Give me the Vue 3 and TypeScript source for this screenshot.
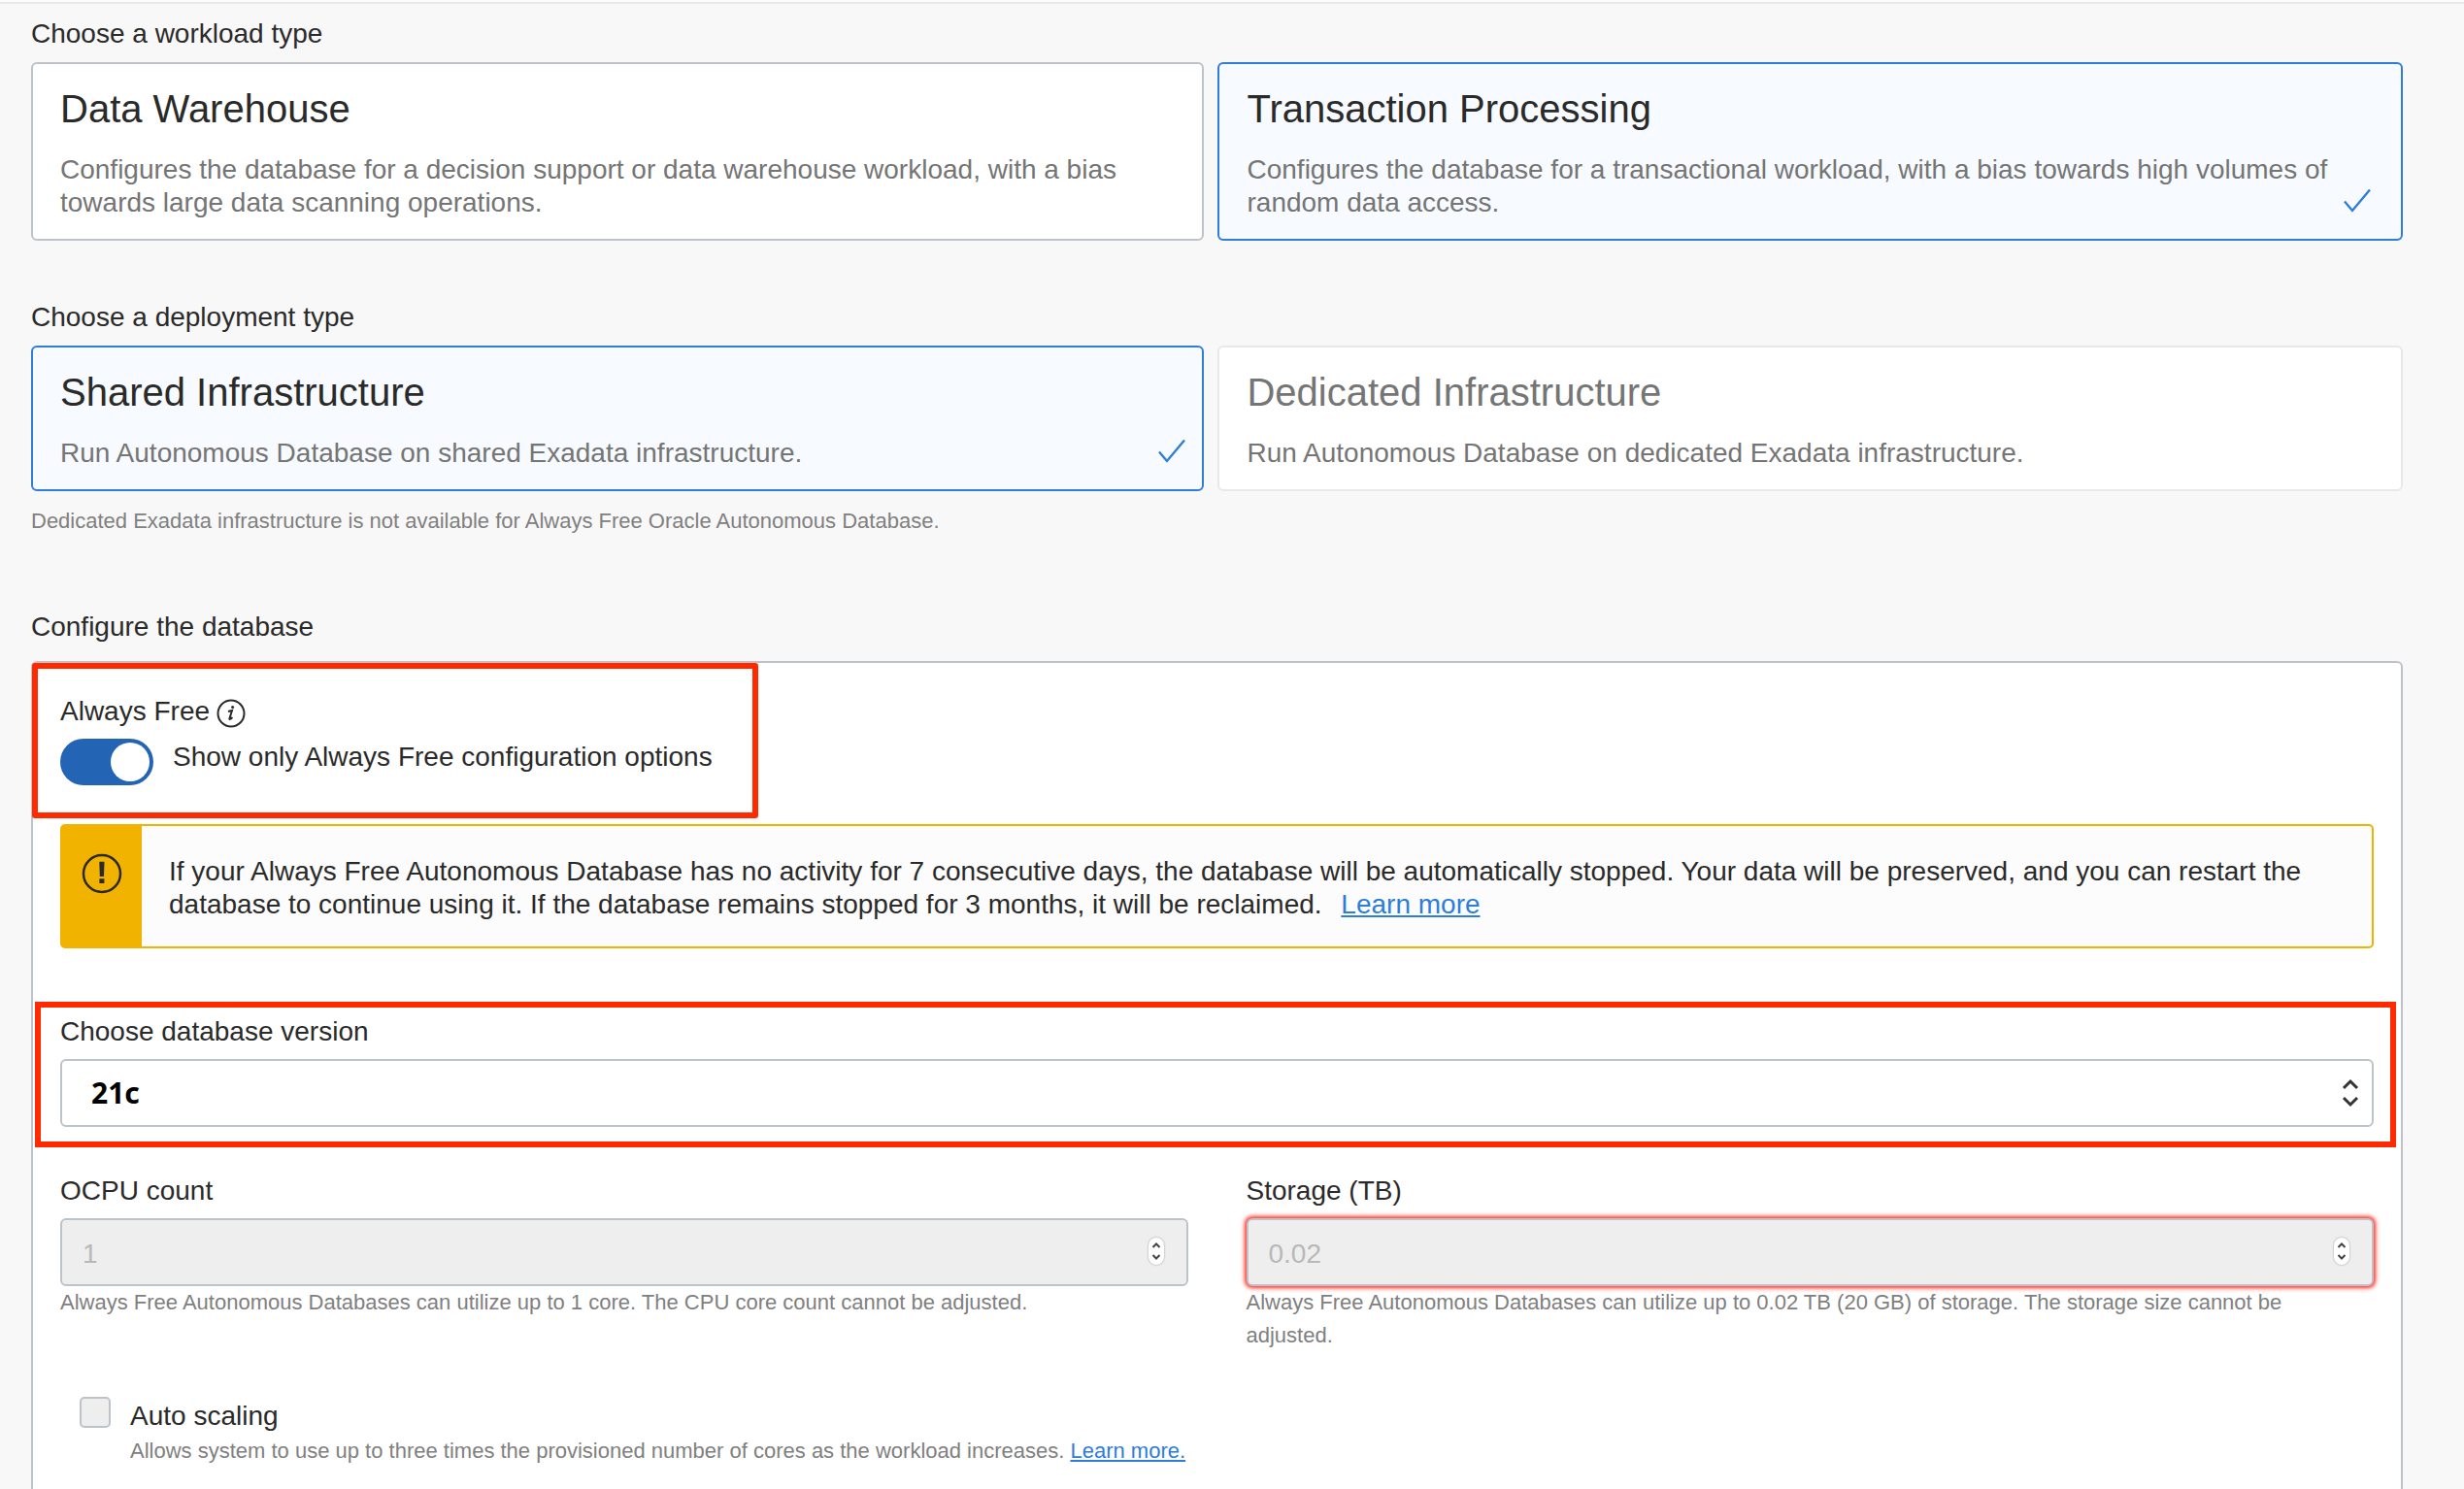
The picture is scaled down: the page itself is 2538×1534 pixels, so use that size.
<script setup lang="ts">
import { ref } from 'vue'

interface Option {
  id: string
  title: string
  text: string
  disabled?: boolean
}

const workloads: Option[] = [
  {
    id: 'dw',
    title: 'Data Warehouse',
    text: 'Configures the database for a decision support or data warehouse workload, with a bias towards large data scanning operations.',
  },
  {
    id: 'tp',
    title: 'Transaction Processing',
    text: 'Configures the database for a transactional workload, with a bias towards high volumes of random data access.',
  },
]

const deployments: Option[] = [
  {
    id: 'shared',
    title: 'Shared Infrastructure',
    text: 'Run Autonomous Database on shared Exadata infrastructure.',
  },
  {
    id: 'dedicated',
    title: 'Dedicated Infrastructure',
    text: 'Run Autonomous Database on dedicated Exadata infrastructure.',
    disabled: true,
  },
]

const groups = [
  { name: 'workload', legend: 'Choose a workload type', options: workloads, hint: '' },
  {
    name: 'deployment',
    legend: 'Choose a deployment type',
    options: deployments,
    hint: 'Dedicated Exadata infrastructure is not available for Always Free Oracle Autonomous Database.',
  },
]

const selected = ref<Record<string, string>>({ workload: 'tp', deployment: 'shared' })
const alwaysFree = ref(true)
const version = ref('21c')
const autoScaling = ref(false)

const resources = [
  {
    id: 'ocpu',
    label: 'OCPU count',
    value: 1,
    invalid: false,
    hint: 'Always Free Autonomous Databases can utilize up to 1 core. The CPU core count cannot be adjusted.',
  },
  {
    id: 'storage',
    label: 'Storage (TB)',
    value: 0.02,
    invalid: true,
    hint: 'Always Free Autonomous Databases can utilize up to 0.02 TB (20 GB) of storage. The storage size cannot be adjusted.',
  },
]
</script>

<template>
  <main class="page">
    <section v-for="g in groups" :key="g.name" class="group" role="radiogroup" :aria-label="g.legend">
      <h2 class="heading">{{ g.legend }}</h2>
      <div class="cards">
        <label
          v-for="o in g.options"
          :key="o.id"
          class="card"
          :class="{ selected: selected[g.name] === o.id, disabled: o.disabled }"
        >
          <input v-model="selected[g.name]" class="card-radio" type="radio" :name="g.name" :value="o.id" :disabled="o.disabled" />
          <span class="card-title">{{ o.title }}</span>
          <span class="card-text">{{ o.text }}</span>
          <svg v-if="selected[g.name] === o.id" class="check" viewBox="0 0 28 26" aria-hidden="true">
            <path d="M1 13.500L9 23 27 1.500" />
          </svg>
        </label>
      </div>
      <p v-if="g.hint" class="hint group-hint">{{ g.hint }}</p>
    </section>

    <section class="configure">
      <h2 class="heading">Configure the database</h2>
      <div class="panel">
        <div class="free">
          <div class="free-title">
            <span>Always Free</span>
            <svg class="info" viewBox="0 0 30 30" aria-hidden="true">
              <circle cx="15" cy="15" r="13.500" />
              <path class="stem" d="M12 13l4-1-2.600 8.200c-.3 1.200.8 1.100 3-1.200" />
              <circle class="dot" cx="16.600" cy="8.600" r="1.500" />
            </svg>
          </div>
          <label class="switch-row">
            <input v-model="alwaysFree" class="switch" type="checkbox" role="switch" />
            <span class="switch-text">Show only Always Free configuration options</span>
          </label>
        </div>

        <div class="alert" role="note">
          <div class="alert-side">
            <svg class="alert-icon" viewBox="0 0 42 42" aria-hidden="true">
              <circle cx="21" cy="21" r="19" />
              <path d="M18.300 8.700h5.200l-.5 15.300h-4.200zM18.400 26.300h5v4.700h-5z" />
            </svg>
          </div>
          <p class="alert-text">
            If your Always Free Autonomous Database has no activity for 7 consecutive days, the database will be
            automatically stopped. Your data will be preserved, and you can restart the database to continue using it. If
            the database remains stopped for 3 months, it will be reclaimed.
            <a class="link alert-link" href="#always-free">Learn more</a>
          </p>
        </div>

        <div class="version">
          <label class="field-label" for="version">Choose database version</label>
          <div class="control">
            <select id="version" v-model="version" class="box select">
              <option value="21c">21c</option>
              <option value="19c">19c</option>
            </select>
            <svg class="updown" viewBox="0 0 18 30" aria-hidden="true">
              <path d="M2 10l7-7 7 7M2 20l7 7 7-7" />
            </svg>
          </div>
        </div>

        <div class="resources">
          <div v-for="r in resources" :key="r.id" class="resource">
            <label class="field-label" :for="r.id">{{ r.label }}</label>
            <div class="control">
              <input
                :id="r.id"
                class="box number"
                :class="{ invalid: r.invalid }"
                type="number"
                step="any"
                :value="r.value"
                :aria-describedby="r.id + '-hint'"
                disabled
              />
              <svg class="stepper" viewBox="0 0 16 28" aria-hidden="true">
                <path d="M4.500 10L8 6.500l3.500 3.500M4.500 18L8 21.500l3.500-3.500" />
              </svg>
            </div>
            <p :id="r.id + '-hint'" class="hint">{{ r.hint }}</p>
          </div>
        </div>

        <div class="scaling">
          <input id="scaling" v-model="autoScaling" class="tick" type="checkbox" disabled />
          <div class="scaling-body">
            <label for="scaling">Auto scaling</label>
            <p class="hint">
              Allows system to use up to three times the provisioned number of cores as the workload increases.
              <a class="link" href="#auto-scaling">Learn more.</a>
            </p>
          </div>
        </div>
      </div>
    </section>
  </main>
</template>

<style>
body {
  margin: 0;
  background: #f8f8f8;
}
</style>

<style scoped>
.page {
  box-sizing: border-box;
  display: flex;
  flex-direction: column;
  min-height: 100vh;
  padding: 16px 63px 0 32px;
  border-top: 2px solid #fcfcfc;
  background: #f8f8f8;
  box-shadow: inset 0 2px #e8e8e8;
  color: #2a2a2a;
  font-family: 'Liberation Sans', Arial, sans-serif;
  font-size: 28px;
  line-height: 34px;
}

.page *,
.page *::before {
  box-sizing: border-box;
}

p,
h2 {
  margin: 0;
}

.heading {
  margin-bottom: 12px;
  font-size: 28px;
  font-weight: 400;
}

.group {
  margin-bottom: 62px;
}

.cards {
  display: grid;
  grid-template-columns: 1208fr 1220fr;
  gap: 14px;
}

.card {
  position: relative;
  display: flex;
  flex-direction: column;
  gap: 22px;
  padding: 22px 28px 20px;
  border: 2px solid #bec3ca;
  border-radius: 6px;
  background: #fff;
  cursor: pointer;
}

.card.selected {
  border-color: #2d7dd9;
  background: #f7fbff;
}

.card.disabled {
  border-color: #e8e8e8;
  cursor: default;
}

.card-radio {
  position: absolute;
  opacity: 0;
}

.card-title {
  font-size: 40px;
  line-height: 48px;
}

.card-text,
.disabled .card-title {
  color: #757575;
}

.check {
  position: absolute;
  right: 17px;
  bottom: 26px;
  width: 28px;
  height: 26px;
  fill: none;
  stroke: #2d7dd9;
  stroke-width: 2.400;
}

.card:last-child .check {
  right: 31px;
}

.hint {
  color: #808080;
  font-size: 22px;
}

.group-hint {
  margin-top: 14px;
  margin-bottom: 75px;
}

.group:has(.group-hint) {
  margin-bottom: 0;
}

.configure {
  display: flex;
  flex: 1;
  flex-direction: column;
}

.configure .heading {
  margin-bottom: 18px;
}

.panel {
  flex: 1;
  padding: 33px 28px 20px;
  border: 2px solid #bec3ca;
  border-bottom: 0;
  border-radius: 6px 6px 0 0;
  background: #fff;
}

/* Red markers that frame the two highlighted settings */
.free,
.version {
  position: relative;
}

.free::before,
.version::before {
  content: '';
  position: absolute;
  border: 6px solid #ff2a00;
  pointer-events: none;
}

.free::before {
  inset: -33px -47px -34px -29px;
  border-radius: 3px;
}

.version::before {
  inset: -14px -23px -21px -26px;
}

.free {
  width: fit-content;
  margin-bottom: 40px;
}

.free-title {
  display: flex;
  align-items: center;
  gap: 7px;
  margin-bottom: 11px;
}

.info {
  width: 30px;
  height: 30px;
  margin-top: 4px;
  fill: none;
  stroke: #2a2a2a;
  stroke-width: 2;
}

.info .dot {
  fill: #2a2a2a;
  stroke: none;
}

.switch-row {
  display: flex;
  align-items: flex-start;
  gap: 20px;
}

.switch-text {
  padding-top: 2px;
}

.switch {
  flex: none;
  width: 96px;
  height: 48px;
  margin: 0;
  padding: 4px;
  border-radius: 24px;
  background: #8a8a8a;
  appearance: none;
}

.switch::before {
  content: '';
  display: block;
  width: 40px;
  height: 40px;
  border-radius: 50%;
  background: #fff;
}

.switch:checked {
  background: #2464b4;
}

.switch:checked::before {
  margin-left: auto;
}

.alert {
  display: flex;
  margin-bottom: 69px;
  border: 2px solid #f2b200;
  border-radius: 5px;
  background: #fcfcfc;
}

.alert-side {
  flex: none;
  width: 82px;
  padding: 28px 20px;
  background: #f2b200;
}

.alert-icon {
  display: block;
  width: 42px;
  height: 42px;
  fill: none;
  stroke: #2a2a2a;
  stroke-width: 2.500;
}

.alert-icon path {
  fill: #2a2a2a;
  stroke: none;
}

.alert-text {
  padding: 30px 28px 26px;
}

.link {
  color: #2d7dd9;
  text-decoration: underline;
}

.alert-link {
  margin-left: 12px;
}

.field-label {
  display: block;
  margin-bottom: 11px;
}

.control {
  position: relative;
}

.box {
  display: block;
  width: 100%;
  height: 70px;
  margin: 0;
  border: 2px solid #bec3ca;
  border-radius: 6px;
  font-family: inherit;
  font-size: 28px;
  appearance: none;
}

.select {
  padding: 0 60px 2px 30px;
  background: #fff;
  color: #000;
  font-family: 'Noto Sans', sans-serif;
  font-size: 30px;
  font-weight: 700;
}

.updown {
  position: absolute;
  top: 20px;
  right: 15px;
  width: 18px;
  height: 30px;
  fill: none;
  stroke: #333;
  stroke-width: 3;
  pointer-events: none;
}

.version {
  margin-bottom: 49px;
}

.resources {
  display: grid;
  grid-template-columns: 1fr 1fr;
  gap: 60px;
  margin-bottom: 46px;
}

.number {
  padding: 4px 60px 0 21px;
  background: #eee;
  color: #b8b8b8;
  appearance: textfield;
}

.number.invalid {
  box-shadow: 0 0 4px 2px #ff2a1c;
}

.stepper {
  position: absolute;
  top: 20px;
  right: 25px;
  width: 16px;
  height: 28px;
  border-radius: 8px;
  background: #fff;
  box-shadow: 0 0 2px rgba(0, 0, 0, 0.4);
  fill: none;
  stroke: #444;
  stroke-width: 2;
}

.scaling {
  display: flex;
  gap: 20px;
  padding-left: 20px;
}

.tick {
  flex: none;
  width: 32px;
  height: 32px;
  margin: 0;
  border: 2px solid #bec3ca;
  border-radius: 5px;
  background: #eee;
  appearance: none;
}

.scaling-body {
  display: flex;
  flex-direction: column;
  gap: 2px;
  padding-top: 3px;
}
</style>
